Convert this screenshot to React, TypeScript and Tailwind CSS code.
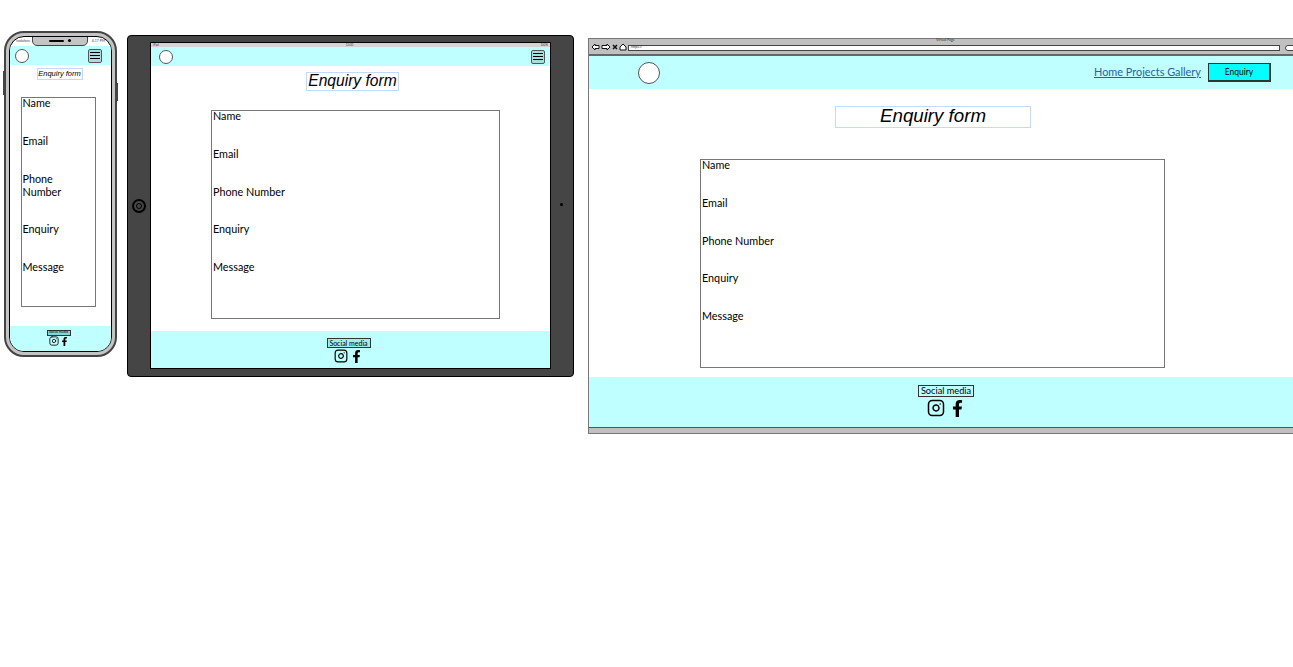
import { Instagram } from 'lucide-react'
import { FaFacebookF } from 'react-icons/fa'

const FIELDS = ['Name', 'Email', 'Phone Number', 'Enquiry', 'Message']

function EnquiryFields({ className }: { className: string }) {
  return (
    <div className={`border border-[#777] bg-white pl-[1px] text-[10.8px] leading-[13px] text-black ${className}`}>
      <div className="-mt-[2px]">
        {FIELDS.map(f => (
          <div key={f} className="mb-[24.75px]">
            {f}
          </div>
        ))}
      </div>
    </div>
  )
}

function Burger() {
  return (
    <div className="flex h-[14px] w-[14px] flex-col justify-center gap-[1.5px] rounded-[2px] border border-[#555] bg-[#a8dede] px-[1px]">
      <div className="h-[1.5px] bg-black" />
      <div className="h-[1.5px] bg-black" />
      <div className="h-[1.5px] bg-black" />
    </div>
  )
}

function Phone() {
  return (
    <div className="relative mt-[31px] h-[326px] w-[113px] shrink-0 rounded-[20px] border-2 border-[#444] bg-[#c4c4c4] p-[3px]">
      <div className="absolute left-[-3px] top-[38px] h-[24px] w-[2px] bg-[#444]" />
      <div className="absolute right-[-3px] top-[50px] h-[18px] w-[2px] bg-[#444]" />
      <div className="flex h-full flex-col overflow-hidden rounded-[15px] border-[1.5px] border-black bg-white">
        <div className="relative flex h-[9px] shrink-0 items-center justify-between px-[6px] text-[3.5px] text-[#444]">
          <span>vodafone</span>
          <span>4:17 PM</span>
          <div className="absolute left-[22px] top-[-2px] flex h-[11px] w-[56px] items-center justify-center gap-[4px] rounded-b-[5px] border border-[#444] bg-[#c4c4c4]">
            <div className="h-[2px] w-[15px] rounded-full bg-black" />
            <div className="h-[3px] w-[3px] rounded-full bg-black" />
          </div>
        </div>
        <div className="flex h-[19px] shrink-0 items-center justify-between bg-[#bfffff] pl-[5px] pr-[9px]">
          <div className="h-[14px] w-[14px] rounded-full border border-[#555] bg-white" />
          <Burger />
        </div>
        <div className="ml-[26.5px] mt-[3px] flex h-[12px] w-[46px] items-center justify-center border border-[#c5d8f5] font-['Liberation_Sans',sans-serif] text-[7.5px] italic text-black">
          Enquiry form
        </div>
        <EnquiryFields className="ml-[10.5px] mt-[17px] h-[210px] w-[75px] pr-[20px]" />
        <div className="mt-auto flex h-[25px] flex-col items-center bg-[#bfffff] pr-[4px] pt-[4px]">
          <div className="flex h-[6px] w-[24px] items-center justify-center whitespace-nowrap border border-[#333] bg-[#7fd8d8] text-[3.5px] text-black">
            Social media
          </div>
          <div className="flex items-center gap-[1px] text-black">
            <Instagram size={10} strokeWidth={2} />
            <FaFacebookF size={9} />
          </div>
        </div>
      </div>
    </div>
  )
}

function Tablet() {
  return (
    <div className="ml-[10px] mt-[35px] flex h-[342px] w-[447px] shrink-0 items-stretch rounded-[4px] border border-black bg-[#454545] pb-[7px] pl-[22px] pr-[22px] pt-[6px]">
      <div className="relative flex flex-1 flex-col border border-black bg-white">
        <div className="absolute left-[-19px] top-[156px] flex h-[14px] w-[14px] items-center justify-center rounded-full border-2 border-black">
          <div className="h-[6px] w-[6px] rounded-full border-[1.5px] border-black" />
        </div>
        <div className="absolute right-[-13px] top-[160px] h-[3px] w-[3px] rounded-full bg-black" />
        <div className="flex h-[4px] shrink-0 items-center justify-between bg-[#d4d4d4] px-[2px] text-[3px] text-[#444]">
          <span>iPad</span>
          <span>12:00</span>
          <span>100%</span>
        </div>
        <div className="flex h-[19px] shrink-0 items-center justify-between bg-[#bfffff] pl-[8px] pr-[5px]">
          <div className="h-[14px] w-[14px] rounded-full border border-[#555] bg-white" />
          <Burger />
        </div>
        <div className="ml-[155px] mt-[6px] flex h-[19px] w-[93px] items-center justify-center border border-[#c5d8f5] pb-[2px] font-['Liberation_Sans',sans-serif] text-[15.6px] italic text-black">
          Enquiry form
        </div>
        <EnquiryFields className="ml-[60px] mt-[19px] h-[209px] w-[289px]" />
        <div className="mt-auto flex h-[37px] flex-col items-center bg-[#bfffff] pr-[4px] pt-[7px]">
          <div className="flex h-[10px] w-[44px] items-center justify-center whitespace-nowrap border border-[#333] bg-[#9feeee] text-[7px] text-black">
            Social media
          </div>
          <div className="mt-[1px] flex items-center gap-[2px] text-black">
            <Instagram size={14} strokeWidth={2} />
            <FaFacebookF size={13} />
          </div>
        </div>
      </div>
    </div>
  )
}

function Browser() {
  return (
    <div className="ml-[14px] mt-[38px] flex h-[396px] w-[720px] shrink-0 flex-col border border-[#777] bg-white">
      <div className="relative flex h-[17px] shrink-0 items-end gap-[1px] border-b-2 border-[#666] bg-[#c0c0c0] pb-[3px] pl-[2px]">
        <span className="absolute left-[347px] top-[-1px] text-[3.5px] text-[#333]">Virtual Page</span>
        <svg width="36" height="8" viewBox="0 0 36 8" className="shrink-0">
          <path d="M1 4 L4 1 V2.5 H8 V5.5 H4 V7 Z" fill="#fff" stroke="#111" strokeWidth="1" />
          <path d="M19 4 L16 1 V2.5 H11 V5.5 H16 V7 Z" fill="#fff" stroke="#111" strokeWidth="1" />
          <path d="M22 2 L26 6 M26 2 L22 6" stroke="#111" strokeWidth="1.5" />
          <path d="M29 4 L32 1 L35 4 V7 H29 Z" fill="#fff" stroke="#111" strokeWidth="1" />
        </svg>
        <div className="flex h-[6px] w-[652px] items-center border border-[#444] bg-white pl-[2px] text-[3.5px] text-[#333]">
          https://
        </div>
        <div className="ml-[4px] h-[6px] flex-1 rounded-l-full border border-[#444] bg-white" />
      </div>
      <div className="flex h-[33px] shrink-0 items-center bg-[#bfffff] pl-[49px]">
        <div className="h-[22px] w-[22px] rounded-full border border-[#555] bg-white" />
        <div className="ml-[434px] text-[10.9px] text-[#2a5fa0] underline">Home Projects Gallery</div>
        <div className="ml-[7px] flex h-[19px] w-[63px] items-center justify-center border border-[#333] border-b-2 border-r-2 bg-[#00ffff] text-[8.5px] text-black">
          Enquiry
        </div>
      </div>
      <div className="ml-[246px] mt-[17px] flex h-[22px] w-[196px] items-center justify-center border border-[#c5d8f5] pb-[2px] font-['Liberation_Sans',sans-serif] text-[18.7px] italic text-black">
        Enquiry form
      </div>
      <EnquiryFields className="ml-[111px] mt-[31px] h-[209px] w-[465px]" />
      <div className="mt-[9px] flex h-[50px] shrink-0 flex-col items-center bg-[#bfffff] pr-[4px] pt-[8px]">
        <div className="flex h-[12px] w-[56px] items-center justify-center whitespace-nowrap border border-[#333] text-[9.2px] text-black">
          Social media
        </div>
        <div className="mt-[2px] flex items-center gap-[4px] text-black">
          <Instagram size={18} strokeWidth={2} />
          <FaFacebookF size={17} />
        </div>
      </div>
      <div className="flex-1 border-t border-[#555] bg-[#c0c0c0]" />
    </div>
  )
}

export default function App() {
  return (
    <div className="flex h-[667px] w-[1293px] items-start overflow-hidden bg-white pl-[4px] font-['Lato',sans-serif]">
      <Phone />
      <Tablet />
      <Browser />
    </div>
  )
}
